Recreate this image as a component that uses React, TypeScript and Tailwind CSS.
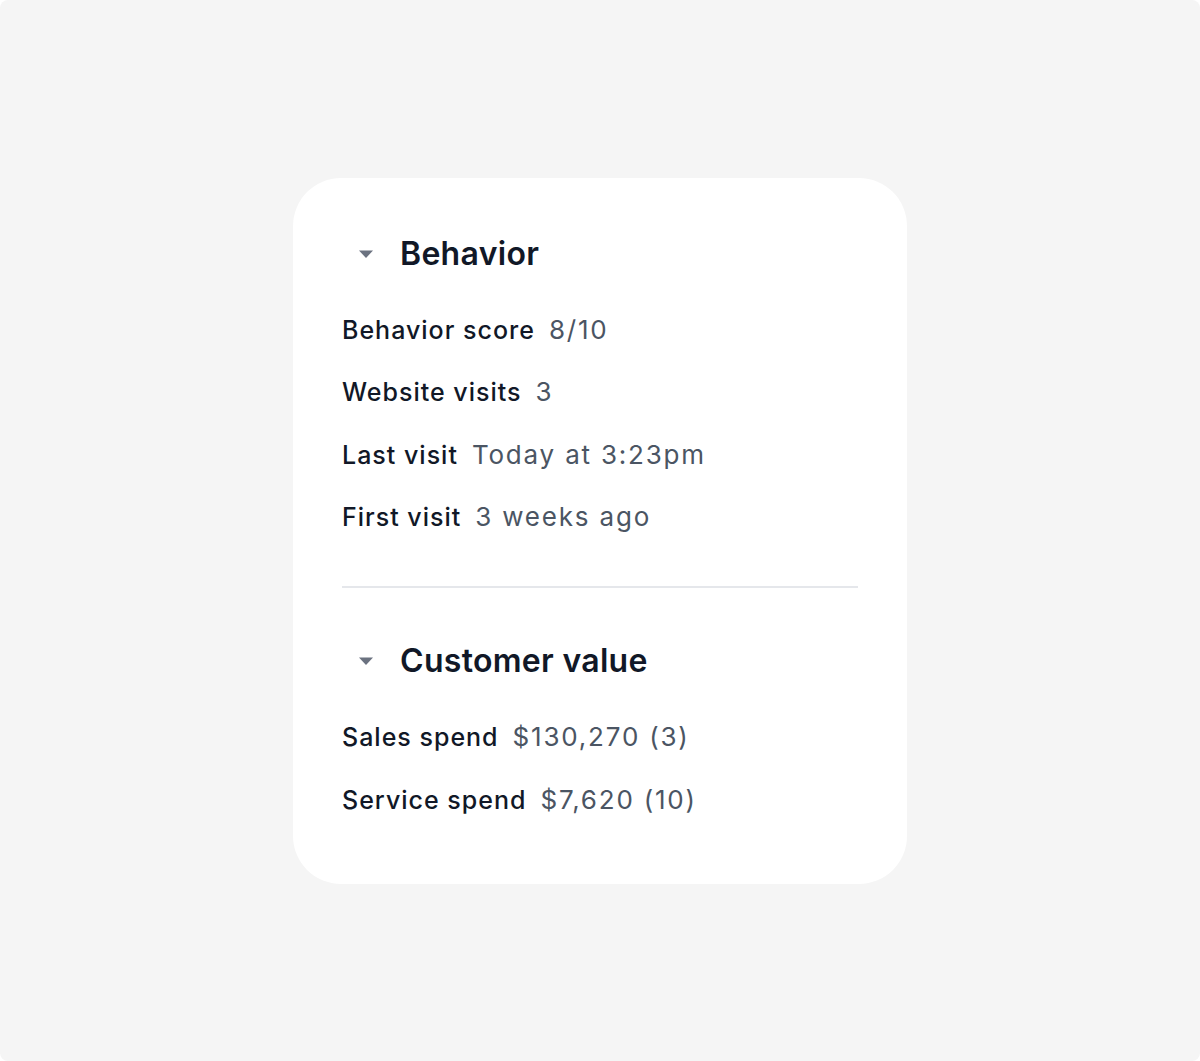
import { Fragment } from "react";

type Row = { label: string; value: string };

const behavior: Row[] = [
  { label: "Behavior score", value: "8/10" },
  { label: "Website visits", value: "3" },
  { label: "Last visit", value: "Today at 3:23pm" },
  { label: "First visit", value: "3 weeks ago" },
];

const customerValue: Row[] = [
  { label: "Sales spend", value: "$130,270 (3)" },
  { label: "Service spend", value: "$7,620 (10)" },
];

const Caret = () => (
  <div className="w-12 flex justify-center">
    <svg width="16" height="10" viewBox="0 0 16 10">
      <path d="M1 1.5h14L8 9z" fill="#6b7280" />
    </svg>
  </div>
);

const Section = ({ title, rows }: { title: string; rows: Row[] }) => (
  <div>
    <div className="flex items-center h-10">
      <Caret />
      <h2 className="ml-[10px] text-[32px] leading-10 font-semibold text-[#111827] tracking-[0.3px]">
        {title}
      </h2>
    </div>
    <div className="mt-10 flex flex-col gap-[30.5px]">
      {rows.map((r) => (
        <div key={r.label} className="flex items-center gap-[14px] leading-8">
          <span className="text-[25px] font-medium text-[#111827] tracking-[1px]">{r.label}</span>
          <span className="text-[26px] text-[#4b5563] tracking-[1.8px]">{r.value}</span>
        </div>
      ))}
    </div>
  </div>
);

export default function App() {
  return (
    <div className="h-[1061px] w-[1200px] bg-white">
      <div
        className="h-full w-full rounded-lg bg-[#f5f5f5] flex items-center justify-center"
        style={{ fontFamily: "Inter, 'Noto Sans', sans-serif" }}
      >
        <div className="w-[614px] rounded-[48px] bg-white px-[49px] pt-[56px] pb-[68px]">
          {[
            { title: "Behavior", rows: behavior },
            { title: "Customer value", rows: customerValue },
          ].map((s, i) => (
            <Fragment key={s.title}>
              {i > 0 && <div className="h-[2px] bg-[#e5e7eb] mt-[53px] mb-[53px]" />}
              <Section title={s.title} rows={s.rows} />
            </Fragment>
          ))}
        </div>
      </div>
    </div>
  );
}
